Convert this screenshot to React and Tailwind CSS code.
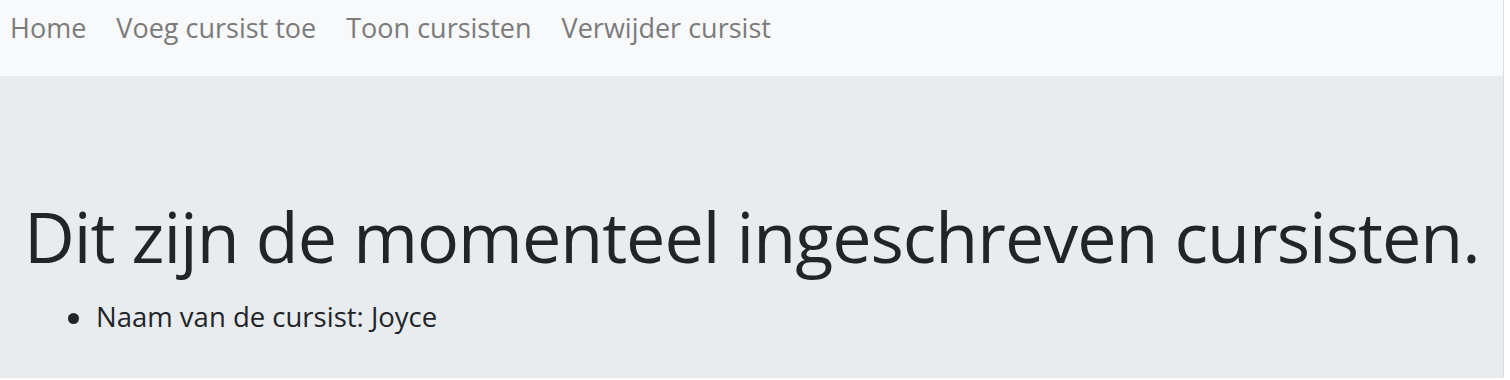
export default function App() {
  const links = ['Home', 'Voeg cursist toe', 'Toon cursisten', 'Verwijder cursist'];

  return (
    <div className="w-[1510px] h-[380px] bg-white" style={{ fontFamily: '"Open Sans", "Noto Sans", sans-serif' }}>
      <div className="w-[1504px] h-[378px] flex flex-col border-r border-[#dcdfe2]">
        {/* Navbar */}
        <nav className="h-[76px] bg-[#f8f9fa] flex items-start pt-[8px] pl-[10px] gap-[30px]">
          {links.map((l) => (
            <a key={l} href="#" className="text-[27px] leading-[40px] text-[#7b7b7c]">
              {l}
            </a>
          ))}
        </nav>

        {/* Jumbotron */}
        <div className="flex-1 bg-[#e9ecef] pt-[116px] pl-[24px]">
          <h1 className="text-[70px] leading-[88px] font-normal text-[#212529] tracking-[-1px]">
            Dit zijn de momenteel ingeschreven cursisten.
          </h1>
          <ul className="pl-[44px] mt-[18px] text-[27.5px] leading-[38px] text-[#212529]">
            <li className="flex items-center">
              <span className="w-[11px] h-[11px] rounded-full bg-[#212529] mr-[17px] mt-[2px]" />
              Naam van de cursist: Joyce
            </li>
          </ul>
        </div>
      </div>
    </div>
  );
}
